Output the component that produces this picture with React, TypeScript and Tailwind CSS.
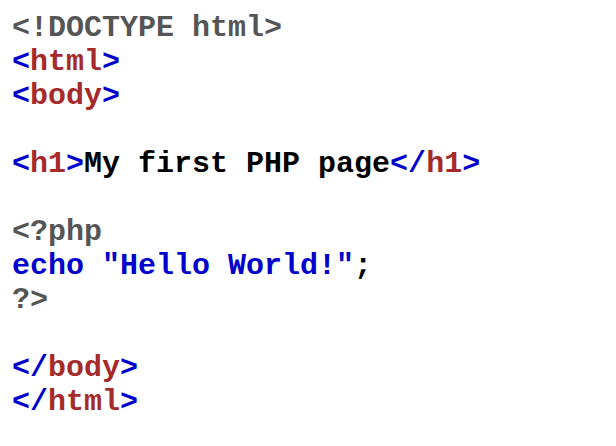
const B = ({ children }: { children: React.ReactNode }) => <span className="text-[#0000cd]">{children}</span>
const T = ({ children }: { children: React.ReactNode }) => <span className="text-[#a52a2a]">{children}</span>

const App = () => {
  return (
    <div className="w-[616px] h-[446px] bg-white pt-[11px] pl-3">
      <pre className="font-['Liberation_Mono',monospace] font-bold text-[30px] leading-[34px] text-black whitespace-pre">
        <div className="text-[#555555]">&lt;!DOCTYPE html&gt;</div>
        <div><B>&lt;</B><T>html</T><B>&gt;</B></div>
        <div><B>&lt;</B><T>body</T><B>&gt;</B></div>
        <div>&nbsp;</div>
        <div>
          <B>&lt;</B><T>h1</T><B>&gt;</B>My first PHP page<B>&lt;/</B><T>h1</T><B>&gt;</B>
        </div>
        <div>&nbsp;</div>
        <div className="text-[#555555]">&lt;?php</div>
        <div><B>echo "Hello World!"</B>;</div>
        <div className="text-[#555555]">?&gt;</div>
        <div>&nbsp;</div>
        <div><B>&lt;/</B><T>body</T><B>&gt;</B></div>
        <div><B>&lt;/</B><T>html</T><B>&gt;</B></div>
      </pre>
    </div>
  )
}

export default App
